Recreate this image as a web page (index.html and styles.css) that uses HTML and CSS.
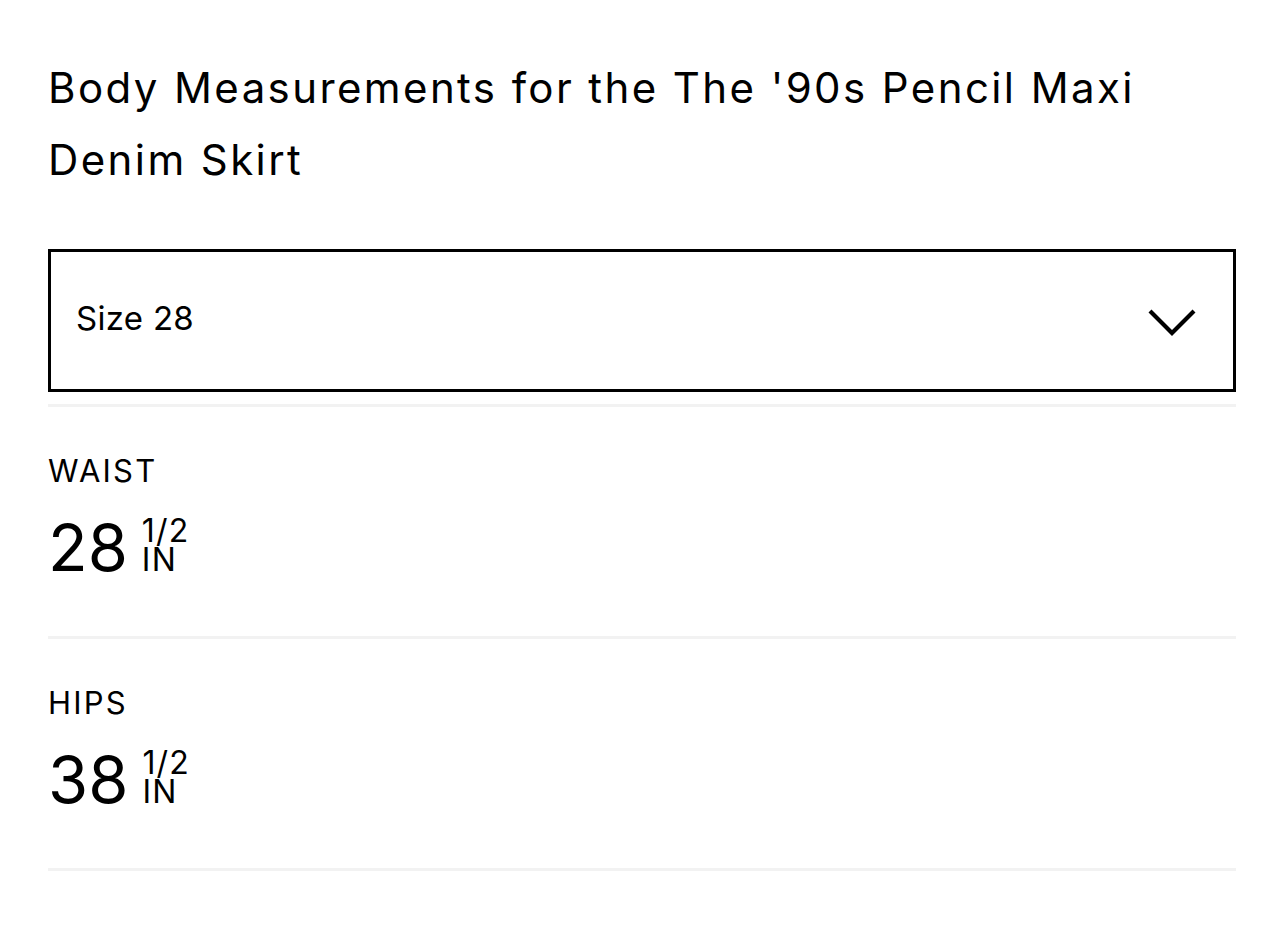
FILE: index.html
```html
<!DOCTYPE html>
<html lang="en">
<head>
<meta charset="utf-8">
<title>Body Measurements</title>
<link rel="stylesheet" href="styles.css">
</head>
<body>
<main class="page">
  <h1 class="title">Body Measurements for the The '90s Pencil Maxi Denim Skirt</h1>
  <div class="select">
    <span class="select-label">Size 28</span>
    <svg class="chevron" width="50" height="30" viewBox="0 0 50 30" aria-hidden="true">
      <polyline points="3,4 25,26 47,4" fill="none" stroke="#000" stroke-width="4.2" stroke-linejoin="miter"/>
    </svg>
  </div>
  <ul class="measures">
    <li class="measure">
      <div class="measure-name">WAIST</div>
      <div class="measure-value">
        <span class="num">28</span>
        <span class="frac"><span class="frac-top">1/2</span><span class="frac-unit">IN</span></span>
      </div>
    </li>
    <li class="measure">
      <div class="measure-name">HIPS</div>
      <div class="measure-value">
        <span class="num">38</span>
        <span class="frac"><span class="frac-top">1/2</span><span class="frac-unit">IN</span></span>
      </div>
    </li>
  </ul>
</main>
</body>
</html>
```

FILE: styles.css
```css
* { box-sizing: border-box; }
html, body { margin: 0; padding: 0; background: #fff; }
body {
  font-family: Inter, "Noto Sans", "Liberation Sans", sans-serif;
  color: #000;
}
.page {
  padding: 52px 48px 0;
}
.title {
  margin: 0;
  font-size: 42px;
  font-weight: 400;
  line-height: 72px;
  letter-spacing: 2.4px;
}
.select {
  margin-top: 53px;
  height: 143px;
  border: 3px solid #000;
  display: flex;
  align-items: center;
  justify-content: space-between;
  padding: 0 36px 0 25px;
}
.select-label {
  font-size: 33px;
  line-height: 40px;
  letter-spacing: 0.3px;
  margin-top: -6px;
}
.chevron { display: block; margin-top: 2px; }
.measures {
  list-style: none;
  margin: 12px 0 0;
  padding: 0;
  border-top: 3px solid #f2f2f2;
}
.measure {
  border-bottom: 3px solid #f2f2f2;
  height: 232px;
  padding-top: 44px;
}
.measure-name {
  font-size: 31px;
  line-height: 40px;
  letter-spacing: 2.2px;
}
.measure-value {
  display: flex;
  align-items: flex-start;
  margin-top: 21px;
}
.num {
  font-size: 65px;
  line-height: 72px;
  letter-spacing: 0;
}
.frac {
  display: flex;
  flex-direction: column;
  margin-left: 14px;
  margin-top: 4px;
  font-size: 32px;
  line-height: 29px;
  letter-spacing: 1.2px;
}
```
